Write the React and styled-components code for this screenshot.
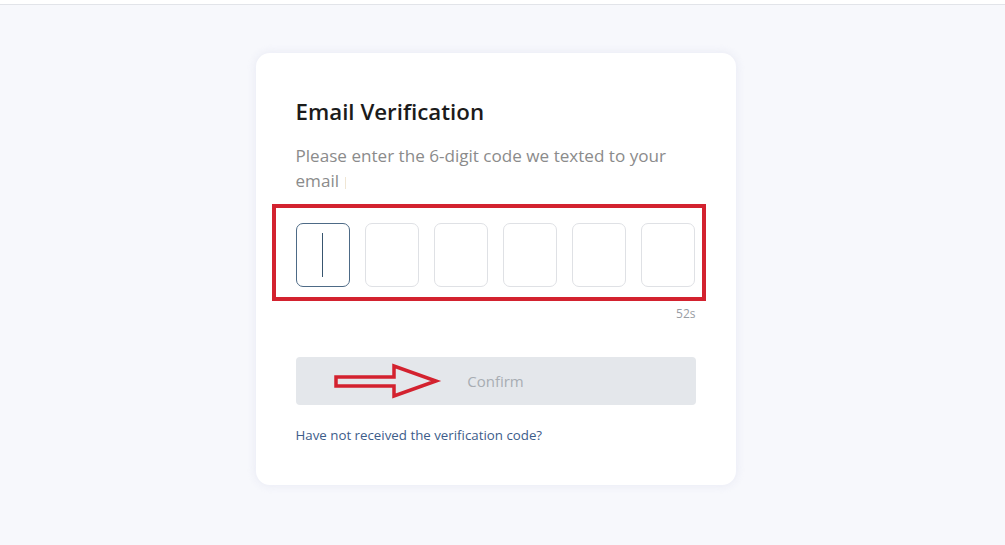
import React from "react";
import styled, { createGlobalStyle } from "styled-components";

const Global = createGlobalStyle`
  html, body { margin: 0; padding: 0; }
  body {
    background: #f7f8fc;
    font-family: "Open Sans", "Noto Sans", sans-serif;
  }
`;

const Page = styled.div`
  min-height: 545px;
  background: #f7f8fc;
  border-top: 4px solid #ffffff;
  box-sizing: border-box;
`;

const TopLine = styled.div`
  height: 1px;
  background: #e2e4e9;
`;

const Center = styled.div`
  display: flex;
  justify-content: center;
  padding-top: 48px;
  padding-right: 14px;
`;

const Card = styled.div`
  position: relative;
  width: 480px;
  height: 432px;
  box-sizing: border-box;
  background: #ffffff;
  border-radius: 14px;
  box-shadow: 0 0 10px rgba(220, 222, 238, 0.6);
  padding: 44px 40px 0 40px;
  display: flex;
  flex-direction: column;
`;

const Title = styled.h1`
  margin: 0;
  font-size: 22.3px;
  font-weight: 600;
  color: #1b1b1b;
  line-height: 30px;
`;

const Subtitle = styled.p`
  margin: 16px 0 0 0;
  font-size: 17.1px;
  line-height: 25px;
  color: #8b8b8b;
`;

const NoWrap = styled.span`
  white-space: nowrap;
`;

const FaintBar = styled.span`
  display: inline-block;
  width: 1px;
  height: 12px;
  background: #f0e6d4;
  margin-left: 6px;
  vertical-align: -2px;
`;

const CodeRow = styled.div`
  display: flex;
  gap: 15px;
  margin-top: 30px;
`;

const CodeBox = styled.div`
  width: 54px;
  height: 64px;
  box-sizing: border-box;
  border-radius: 7px;
  border: 1px solid ${(p) => (p.$active ? "#4d6a86" : "#dfe1e5")};
  display: flex;
  align-items: center;
  justify-content: center;
`;

const Caret = styled.div`
  width: 1px;
  height: 44px;
  background: #38556f;
`;

const Timer = styled.div`
  text-align: right;
  font-size: 12px;
  color: #999da3;
  margin-top: 19px;
  line-height: 16px;
`;

const Button = styled.button`
  margin-top: 35px;
  height: 48px;
  border: none;
  border-radius: 4px;
  background: #e4e7eb;
  color: #a8adb3;
  font-family: inherit;
  font-size: 15px;
  width: 100%;
`;

const Link = styled.a`
  margin-top: 22px;
  font-size: 13.3px;
  color: #3d5d8a;
  text-decoration: none;
  line-height: 16px;
`;

const Highlight = styled.div`
  position: absolute;
  left: 16px;
  top: 151px;
  width: 434px;
  height: 97px;
  box-sizing: border-box;
  border: 4px solid #d3222f;
  pointer-events: none;
`;

const Arrow = styled.svg`
  position: absolute;
  left: 76px;
  top: 310px;
  pointer-events: none;
`;

export default function App() {
  return (
    <Page>
      <Global />
      <TopLine />
      <Center>
        <Card>
          <Title>Email Verification</Title>
          <Subtitle>
            Please enter the 6-digit code we texted to your{" "}
            <NoWrap>
              email
              <FaintBar />
            </NoWrap>
          </Subtitle>
          <CodeRow>
            {[0, 1, 2, 3, 4, 5].map((i) => (
              <CodeBox key={i} $active={i === 0}>
                {i === 0 && <Caret />}
              </CodeBox>
            ))}
          </CodeRow>
          <Timer>52s</Timer>
          <Button>Confirm</Button>
          <Link href="#">Have not received the verification code?</Link>
          <Highlight />
          <Arrow width="112" height="40" viewBox="0 0 112 40">
            <path
              d="M4 14 L62 14 L62 3 L104 18 L62 33 L62 23 L4 23 Z"
              fill="none"
              stroke="#d3222f"
              strokeWidth="3.5"
              strokeLinejoin="miter"
            />
          </Arrow>
        </Card>
      </Center>
    </Page>
  );
}
